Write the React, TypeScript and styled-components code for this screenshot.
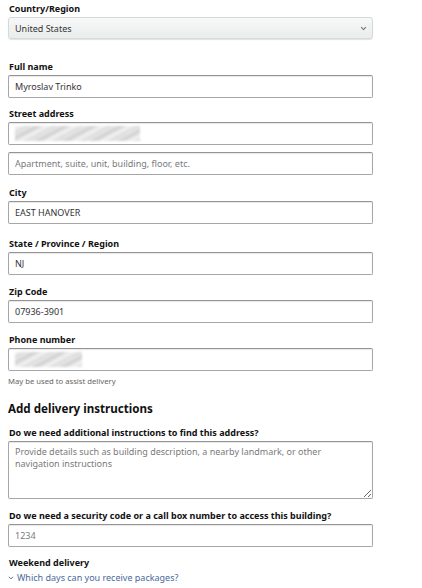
import styled, { createGlobalStyle } from 'styled-components';

const GlobalStyle = createGlobalStyle`
  html, body {
    margin: 0;
    padding: 0;
    background: #ffffff;
  }
  body {
    font-family: "Noto Sans", "DejaVu Sans", sans-serif;
    color: #111111;
  }
`;

const Form = styled.form`
  width: 365px;
  padding: 3px 0 0 8px;
  display: flex;
  flex-direction: column;
`;

const Field = styled.div<{ $after?: number }>`
  display: flex;
  flex-direction: column;
  margin-bottom: ${({ $after }) => $after ?? 11}px;
`;

const Label = styled.label`
  font-size: 9px;
  line-height: 12px;
  font-weight: 700;
  color: #111111;
  margin: 0 0 2px 1px;
`;

const SelectBox = styled.div`
  height: 22px;
  box-sizing: border-box;
  border: 1px solid #d5d9d9;
  border-radius: 3px;
  background: linear-gradient(#f7f8f8, #eaeded);
  box-shadow: 0 1px 1px rgba(15, 17, 17, 0.12);
  display: flex;
  align-items: center;
  justify-content: space-between;
  padding: 0 5px 0 6px;
  font-size: 9px;
  color: #333333;
`;

const Input = styled.input`
  height: 23px;
  box-sizing: border-box;
  border: 1px solid #a6a6a6;
  border-top-color: #949494;
  border-radius: 2px;
  box-shadow: inset 0 1px 1px rgba(15, 17, 17, 0.1);
  padding: 0 6px;
  font-family: inherit;
  font-size: 9px;
  color: #333333;
  outline: none;
  background: #ffffff;

  &::placeholder {
    color: #7a7a7a;
  }
`;

const Stack = styled.div`
  display: flex;
  flex-direction: column;
  gap: 7px;
`;

const RedactedInput = styled.div<{ $blur: number }>`
  height: 23px;
  box-sizing: border-box;
  border: 1px solid #a6a6a6;
  border-top-color: #949494;
  border-radius: 2px;
  box-shadow: inset 0 1px 1px rgba(15, 17, 17, 0.1);
  padding: 3px 6px;
  overflow: hidden;

  span {
    display: block;
    width: ${({ $blur }) => $blur}px;
    height: 100%;
    background: repeating-linear-gradient(
      -28deg,
      #d8d8d8 0px,
      #f3f3f3 5px,
      #cfcfcf 9px,
      #ececec 13px
    );
    filter: blur(1.2px);
  }
`;

const Hint = styled.div`
  font-size: 7.7px;
  color: #666666;
  margin: 5px 0 0 0;
`;

const Heading = styled.h2`
  font-size: 11.6px;
  line-height: 16px;
  font-weight: 700;
  color: #111111;
  margin: 15px 0 10px 0;
`;

const TextArea = styled.textarea`
  height: 58px;
  box-sizing: border-box;
  border: 1px solid #a6a6a6;
  border-top-color: #949494;
  border-radius: 2px;
  box-shadow: inset 0 1px 1px rgba(15, 17, 17, 0.1);
  padding: 4px 6px;
  font-family: inherit;
  font-size: 9px;
  line-height: 12px;
  resize: vertical;
  outline: none;

  &::placeholder {
    color: #7a7a7a;
  }
`;

const Link = styled.a`
  font-size: 9px;
  line-height: 12px;
  color: #4a6a9c;
  text-decoration: none;
  display: flex;
  align-items: center;
  gap: 3px;
  margin-top: 1px;
`;

function Chevron({ size = 8, color = '#555' }: { size?: number; color?: string }) {
  return (
    <svg width={size} height={size} viewBox="0 0 10 10" fill="none">
      <path d="M2 3.5 L5 6.5 L8 3.5" stroke={color} strokeWidth="1.6" strokeLinecap="round" strokeLinejoin="round" />
    </svg>
  );
}

export default function App() {
  return (
    <>
      <GlobalStyle />
      <Form onSubmit={(e) => e.preventDefault()}>
        <Field $after={22}>
          <Label>Country/Region</Label>
          <SelectBox>
            <span>United States</span>
            <Chevron size={7} color="#777" />
          </SelectBox>
        </Field>

        <Field $after={10}>
          <Label>Full name</Label>
          <Input defaultValue="Myroslav Trinko" />
        </Field>

        <Field $after={12}>
          <Label>Street address</Label>
          <Stack>
            <RedactedInput $blur={125}>
              <span />
            </RedactedInput>
            <Input placeholder="Apartment, suite, unit, building, floor, etc." />
          </Stack>
        </Field>

        <Field $after={14}>
          <Label>City</Label>
          <Input defaultValue="EAST HANOVER" />
        </Field>

        <Field>
          <Label>State / Province / Region</Label>
          <Input defaultValue="NJ" />
        </Field>

        <Field>
          <Label>Zip Code</Label>
          <Input defaultValue="07936-3901" />
        </Field>

        <Field $after={0}>
          <Label>Phone number</Label>
          <RedactedInput $blur={67}>
            <span />
          </RedactedInput>
          <Hint>May be used to assist delivery</Hint>
        </Field>

        <Heading>Add delivery instructions</Heading>

        <Field $after={11}>
          <Label>Do we need additional instructions to find this address?</Label>
          <TextArea placeholder="Provide details such as building description, a nearby landmark, or other navigation instructions" />
        </Field>

        <Field $after={10}>
          <Label>Do we need a security code or a call box number to access this building?</Label>
          <Input placeholder="1234" />
        </Field>

        <Field $after={0}>
          <Label>Weekend delivery</Label>
          <Link href="#">
            <Chevron size={6} color="#4a6a9c" />
            Which days can you receive packages?
          </Link>
        </Field>
      </Form>
    </>
  );
}
